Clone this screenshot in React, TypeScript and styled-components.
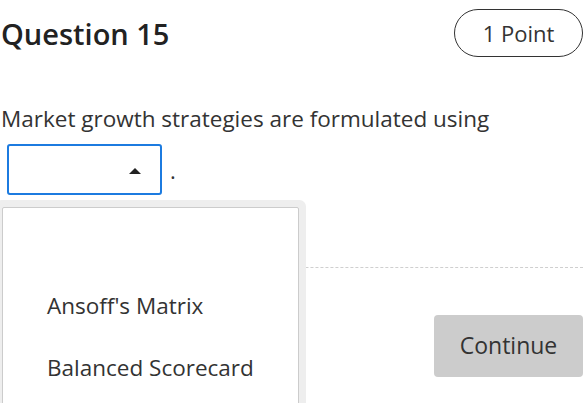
import React from "react";
import styled, { createGlobalStyle } from "styled-components";

const GlobalStyle = createGlobalStyle`
  html, body {
    margin: 0;
    padding: 0;
    background: #fff;
    overflow: hidden;
  }
  body {
    font-family: "Open Sans", "Liberation Sans", sans-serif;
    color: #222;
  }
`;

const Page = styled.div`
  width: 584px;
  height: 403px;
  padding: 0 1px;
  box-sizing: border-box;
  overflow: hidden;
`;

const Header = styled.div`
  display: flex;
  align-items: center;
  justify-content: space-between;
  height: 48px;
  margin-top: 9px;
`;

const Title = styled.h2`
  margin: 0;
  font-size: 29px;
  font-weight: 600;
  color: #222;
  line-height: 1;
`;

const PointBadge = styled.div`
  width: 129px;
  height: 48px;
  box-sizing: border-box;
  border: 1px solid #333;
  border-radius: 24px;
  display: flex;
  align-items: center;
  justify-content: center;
  font-size: 22px;
  font-weight: 500;
  color: #333;
`;

const Prompt = styled.p`
  margin: 45px 0 0;
  font-size: 22.5px;
  line-height: 33px;
  color: #333;
`;

const AnswerRow = styled.div`
  display: flex;
  align-items: center;
  margin: 9px 0 0 6px;
`;

const SelectWrap = styled.div`
  position: relative;
`;

const SelectBox = styled.div`
  width: 155px;
  height: 51px;
  box-sizing: border-box;
  border: 2px solid #1c7be0;
  border-radius: 3px;
  background: #fff;
  position: relative;
`;

const Caret = styled.span`
  position: absolute;
  right: 19px;
  top: 22px;
  width: 0;
  height: 0;
  border-left: 6px solid transparent;
  border-right: 6px solid transparent;
  border-bottom: 6px solid #222;
`;

const Period = styled.span`
  margin-left: 8px;
  font-size: 22px;
  color: #333;
`;

const Listbox = styled.ul`
  position: absolute;
  top: 63px;
  left: -5px;
  width: 297px;
  height: 260px;
  margin: 0;
  padding: 5px 0 0;
  list-style: none;
  box-sizing: border-box;
  background: #fff;
  border: 1px solid #ccc;
  border-radius: 2px;
  box-shadow: 0 0 0 7px #eeeeee;
  z-index: 2;
`;

const Option = styled.li`
  height: 62px;
  line-height: 62px;
  padding-left: 44px;
  font-size: 22.5px;
  color: #333;
  white-space: nowrap;
`;

const Divider = styled.hr`
  margin: 72px 0 0;
  border: 0;
  border-top: 1px dashed #cfcfcf;
`;

const Footer = styled.div`
  display: flex;
  justify-content: flex-end;
  margin-top: 47px;
`;

const ContinueButton = styled.button`
  width: 149px;
  height: 62px;
  border: 0;
  border-radius: 4px;
  background: #cccccc;
  color: #333;
  font-family: "Open Sans", "Liberation Sans", sans-serif;
  font-size: 23px;
  padding: 0 0 2px;
`;

const options = ["", "Ansoff's Matrix", "Balanced Scorecard"];

export default function App() {
  return (
    <Page>
      <GlobalStyle />
      <Header>
        <Title>Question 15</Title>
        <PointBadge>1 Point</PointBadge>
      </Header>
      <Prompt>Market growth strategies are formulated using</Prompt>
      <AnswerRow>
        <SelectWrap>
          <SelectBox>
            <Caret />
          </SelectBox>
          <Listbox>
            {options.map((o, i) => (
              <Option key={i}>{o}</Option>
            ))}
          </Listbox>
        </SelectWrap>
        <Period>.</Period>
      </AnswerRow>
      <Divider />
      <Footer>
        <ContinueButton>Continue</ContinueButton>
      </Footer>
    </Page>
  );
}
